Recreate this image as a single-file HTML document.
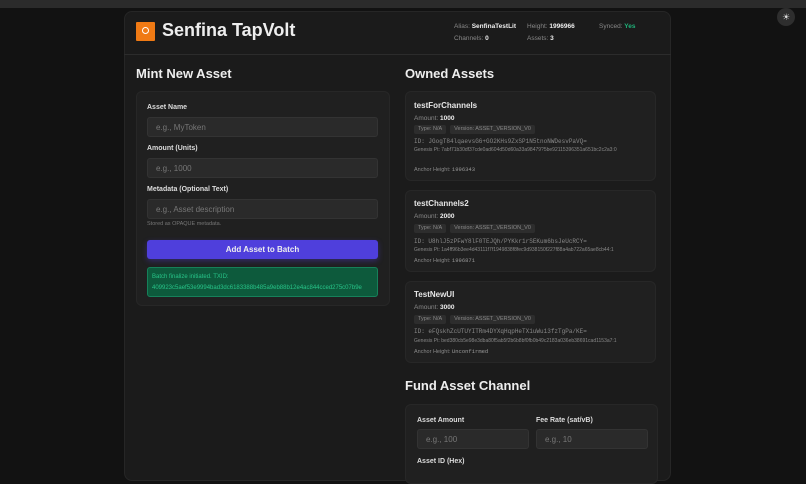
<!DOCTYPE html>
<html><head><style>
*{box-sizing:border-box;margin:0;padding:0}
body{width:806px;height:471px;overflow:hidden;background:#121212;font-family:"Liberation Sans","DejaVu Sans",sans-serif;color:#e6e6e6;position:relative}
.a{position:absolute}
.top{left:0;top:0;width:806px;height:8px;background:#2b2b2b}
.main{left:124px;top:11px;width:547px;height:470px;background:#1b1b1b;border-radius:8px;border:1px solid #262626}
.hdr{left:124px;top:54px;width:547px;height:1px;background:#2c2c2c}
.card{background:#202020;border:1px solid #272727;border-radius:6px}
.lbl{font-size:7px;font-weight:bold;color:#ddd}
.inp{background:#2a2a2a;border:1px solid #333;border-radius:3px;font-size:8px;color:#777;padding:5px 8px}
.h2{font-size:13px;font-weight:bold;color:#eee}
.sm{font-size:5.5px;color:#888;white-space:nowrap;overflow:hidden;line-height:7px}
.tg{font-size:5.5px;line-height:9px;height:9px}
.tag{display:inline-block;vertical-align:top;background:#2d2d2d;color:#888;font-size:5.5px;line-height:7px;padding:1px 4px;border-radius:2px;margin-right:4px}
.mono{font-family:"Liberation Mono",monospace}
.c>div{position:absolute;left:8px;right:6px}
.t{font-size:8px;font-weight:bold;line-height:10px}
.am{font-size:6.5px;color:#888;line-height:8px}
</style></head><body>
<div class="a top"></div>
<div class="a main"></div>
<div class="a hdr"></div>
<div class="a" style="left:136px;top:22px;width:19px;height:19px;background:#f07a14;border-radius:1px"><div style="width:7px;height:7px;border:1px solid #fff;border-radius:50%;margin:5px auto 0"></div></div>
<div class="a" style="left:162px;top:20px;font-size:18px;font-weight:bold;color:#eee">Senfina TapVolt</div>
<div class="a" style="left:454px;top:23px;font-size:6.5px;color:#888">Alias: <b style="color:#eee">SenfinaTestLit</b></div>
<div class="a" style="left:454px;top:35px;font-size:6.5px;color:#888">Channels: <b style="color:#eee">0</b></div>
<div class="a" style="left:527px;top:23px;font-size:6.5px;color:#888">Height: <b style="color:#eee">1996966</b></div>
<div class="a" style="left:527px;top:35px;font-size:6.5px;color:#888">Assets: <b style="color:#eee">3</b></div>
<div class="a" style="left:599px;top:23px;font-size:6.5px;color:#888">Synced: <b style="color:#1fb37a">Yes</b></div>
<div class="a" style="left:777px;top:8px;width:18px;height:18px;border-radius:50%;background:#2e2e2e;color:#ddd;font-size:9px;text-align:center;line-height:18px">☀</div>

<div class="a h2" style="left:136px;top:66px">Mint New Asset</div>
<div class="a card" style="left:136px;top:91px;width:254px;height:215px"></div>
<div class="a lbl" style="left:147px;top:104px">Asset Name</div>
<div class="a inp" style="left:147px;top:117px;width:231px;height:20px">e.g., MyToken</div>
<div class="a lbl" style="left:147px;top:145px">Amount (Units)</div>
<div class="a inp" style="left:147px;top:158px;width:231px;height:20px">e.g., 1000</div>
<div class="a lbl" style="left:147px;top:186px">Metadata (Optional Text)</div>
<div class="a inp" style="left:147px;top:199px;width:231px;height:20px">e.g., Asset description</div>
<div class="a sm" style="left:147px;top:221px;color:#777">Stored as OPAQUE metadata.</div>
<div class="a" style="left:147px;top:240px;width:231px;height:19px;background:#4f3fdc;border-radius:3px;font-size:8px;font-weight:bold;color:#eee;text-align:center;line-height:19px;box-shadow:0 2px 6px rgba(80,60,220,.4)">Add Asset to Batch</div>
<div class="a" style="left:147px;top:267px;width:231px;height:30px;background:#0d5a3c;border:1px solid #16805a;border-radius:3px;font-size:6px;color:#27c488;padding:4px 4px;line-height:11px;white-space:nowrap;overflow:hidden">Batch finalize initiated. TXID:<br>409923c5aef53e9994bad3dc6183388b485a9eb88b12e4ac844cced275c07b9e</div>

<div class="a h2" style="left:405px;top:66px">Owned Assets</div>

<div class="a card c" style="left:405px;top:91px;width:251px;height:90px">
<div class="t" style="top:9px">testForChannels</div>
<div class="am" style="top:23px">Amount: <b style="color:#eee">1000</b></div>
<div class="tg" style="top:33px"><span class="tag">Type: N/A</span><span class="tag">Version: ASSET_VERSION_V0</span></div>
<div class="sm mono" style="top:46px;font-size:6px">ID: JGogT84lqaevsG6+GO2KHs9ZxSP1N5tnoNWDesvPaVQ=</div>
<div class="sm" style="top:55px;font-size:5px;white-space:normal;word-break:break-all;height:14px">Genesis Pt: 7abf71b30df37cde0ad604d50d60a33a98479?5be92115396351a651bc2c2a3:0</div>
<div class="sm" style="top:74px">Anchor Height: <span class="mono" style="color:#999">1996343</span></div>
</div>

<div class="a card c" style="left:405px;top:190px;width:251px;height:82px">
<div class="t" style="top:8px">testChannels2</div>
<div class="am" style="top:22px">Amount: <b style="color:#eee">2000</b></div>
<div class="tg" style="top:33px"><span class="tag">Type: N/A</span><span class="tag">Version: ASSET_VERSION_V0</span></div>
<div class="sm mono" style="top:47px;font-size:6px">ID: U8hlJ5zPFwY8lF0TEJQh/PYKkr1rSEKum6bsJeUcRCY=</div>
<div class="sm" style="top:56px;font-size:5px">Genesis Pt: 1a4ff96b3ee4d43111f7f1949838f8fec9d938150f227f88a4ab722a65ae8cb44:1</div>
<div class="sm" style="top:66px">Anchor Height: <span class="mono" style="color:#999">1996871</span></div>
</div>

<div class="a card c" style="left:405px;top:281px;width:251px;height:82px">
<div class="t" style="top:8px">TestNewUI</div>
<div class="am" style="top:22px">Amount: <b style="color:#eee">3000</b></div>
<div class="tg" style="top:33px"><span class="tag">Type: N/A</span><span class="tag">Version: ASSET_VERSION_V0</span></div>
<div class="sm mono" style="top:46px;font-size:6px">ID: eFQskhZcUTUYITRm4DYXqHqpHeTX1uWu13fzTgPa/KE=</div>
<div class="sm" style="top:56px;font-size:5px">Genesis Pt: bed380cb5e98e3dba80f5ab5f2b6b8bf0fb0b49c2183a036eb38691cad1153a7:1</div>
<div class="sm" style="top:66px">Anchor Height: <span class="mono" style="color:#999">Unconfirmed</span></div>
</div>

<div class="a h2" style="left:405px;top:378px">Fund Asset Channel</div>
<div class="a card" style="left:405px;top:404px;width:253px;height:80px"></div>
<div class="a lbl" style="left:417px;top:417px">Asset Amount</div>
<div class="a inp" style="left:417px;top:429px;width:112px;height:20px">e.g., 100</div>
<div class="a lbl" style="left:536px;top:417px">Fee Rate (sat/vB)</div>
<div class="a inp" style="left:536px;top:429px;width:112px;height:20px">e.g., 10</div>
<div class="a lbl" style="left:417px;top:458px">Asset ID (Hex)</div>
</body></html>
